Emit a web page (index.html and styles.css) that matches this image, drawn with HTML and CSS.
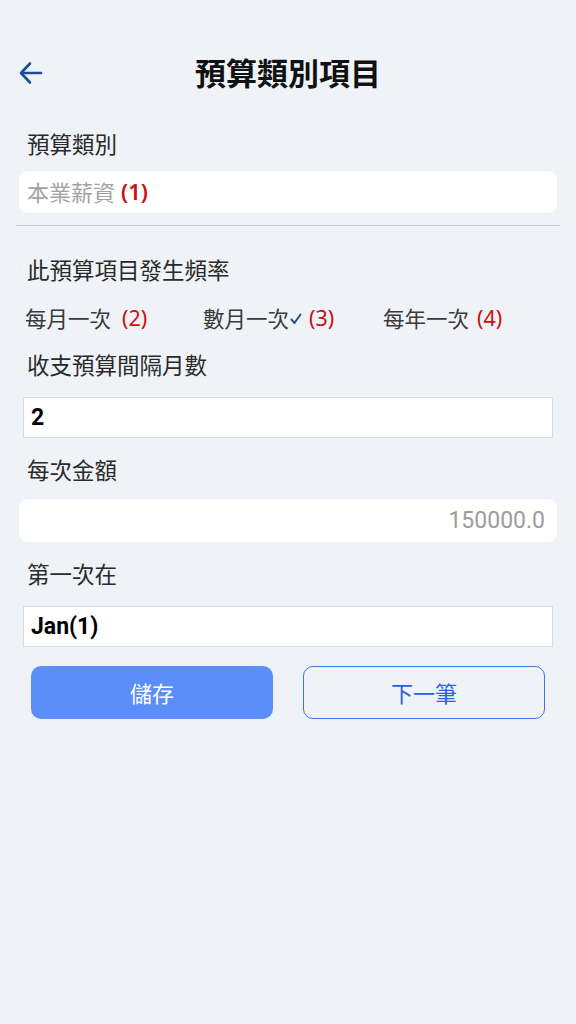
FILE: index.html
```html
<!DOCTYPE html>
<html lang="zh-Hant">
<head>
  <meta charset="UTF-8">
  <title>預算類別項目</title>
  <link rel="stylesheet" href="styles.css">
</head>
<body>
  <div class="header">
    <span class="back-icon">
      <svg width="26" height="26" viewBox="0 0 26 26">
        <polyline points="12,3.5 3,13 12,22.5" fill="none" stroke="#1d4c9c" stroke-width="2.6" stroke-linecap="round" stroke-linejoin="round"/>
        <line x1="3.5" y1="13" x2="23" y2="13" stroke="#1d4c9c" stroke-width="2.6" stroke-linecap="round"/>
      </svg>
    </span>
    <h1 class="title">預算類別項目</h1>
    <span></span>
  </div>

  <div class="form">
    <div class="label first">預算類別</div>
    <div class="field soft">
      <span class="hint">本業薪資</span><span class="code strong">(1)</span>
    </div>

    <hr class="divider">

    <div class="label spaced">此預算項目發生頻率</div>
    <div class="freq-row">
      <div class="freq">每月一次<span class="code wide">(2)</span></div>
      <div class="freq">數月一次<svg class="check" width="12" height="12" viewBox="0 0 12 12"><polyline points="1.5,6.5 4.5,10 10.5,1.5" fill="none" stroke="#2b4f8c" stroke-width="2" stroke-linecap="round" stroke-linejoin="round"/></svg><span class="code">(3)</span></div>
      <div class="freq">每年一次<span class="code">(4)</span></div>
    </div>

    <div class="label">收支預算間隔月數</div>
    <div class="field boxed">2</div>

    <div class="label">每次金額</div>
    <div class="field soft amount">150000.0</div>

    <div class="label">第一次在</div>
    <div class="field boxed">Jan(1)</div>

    <div class="actions">
      <button class="btn primary">儲存</button>
      <button class="btn outline">下一筆</button>
    </div>
  </div>
</body>
</html>
```

FILE: styles.css
```css
body {
  margin: 0;
  background-color: #eff3f7;
  font-family: 'Noto Sans CJK TC', 'Noto Sans', sans-serif;
  color: #222;
}
.header {
  display: grid;
  grid-template-columns: 1fr auto 1fr;
  align-items: center;
  height: 56px;
  margin-top: 44px;
}
.back-icon {
  display: flex;
  padding-left: 18px;
  margin-top: 1px;
}
.title {
  margin: 0;
  font-size: 31px;
  font-weight: 700;
  color: #111;
  line-height: 56px;
}
.form {
  display: flex;
  flex-direction: column;
  padding: 0 16px;
}
.label {
  font-size: 22.5px;
  line-height: 26px;
  padding-bottom: 4px;
  color: #2a2a2a;
  padding-left: 11px;
  margin-top: 18px;
}
.label.first {
  margin-top: 30px;
}
.label.spaced {
  margin-top: 30px;
}
.field {
  background-color: #fff;
  box-sizing: border-box;
  display: flex;
  align-items: center;
  font-size: 22px;
}
.field.soft {
  margin: 11px 3px 0;
  height: 42px;
  border-radius: 8px;
  padding: 0 8px 3px;
}
.field.boxed {
  margin: 16px 7px 0;
  height: 41px;
  border: 1px solid #dadde0;
  padding: 0 7px;
  font-family: Roboto, sans-serif;
  font-weight: 700;
  font-size: 23px;
  color: #000;
}
.field.amount {
  margin-top: 13px;
  height: 43px;
  justify-content: flex-end;
  padding: 0 12px 0 0;
  font-family: Roboto, sans-serif;
  font-size: 23px;
  color: #9d9d9d;
}
.hint {
  color: #a2a2a2;
}
.code {
  font-family: 'Noto Sans', sans-serif;
  color: #cc1010;
  margin-left: 8px;
}
.code.wide {
  margin-left: 11px;
}
.code.strong {
  font-weight: 600;
  margin-left: 6px;
}
.divider {
  border: none;
  border-top: 1px solid #cccfd2;
  margin: 12px 0 0;
}
.freq-row {
  display: grid;
  grid-template-columns: repeat(3, 1fr);
  margin: 17px -5px 0 9px;
}
.freq {
  font-size: 21.5px;
  line-height: 30px;
  color: #3a3a3a;
  display: flex;
  align-items: center;
  white-space: nowrap;
}
.freq:nth-child(2) {
  margin-left: -2px;
}
.freq:nth-child(3) {
  margin-left: -2px;
}
.check {
  margin: 2px 0 0 1px;
}
.check + .code {
  margin-left: 7px;
}
.actions {
  display: grid;
  grid-template-columns: 1fr 1fr;
  gap: 30px;
  margin: 19px 15px 0;
}
.btn {
  height: 53px;
  border-radius: 10px;
  font-family: 'Noto Sans CJK TC', sans-serif;
  font-size: 22px;
  padding-bottom: 3px;
}
.btn.primary {
  background-color: #5b8ef9;
  border: none;
  color: #fff;
}
.btn.outline {
  background-color: transparent;
  border: 1px solid #3f74e6;
  color: #2a5fdd;
}
```
